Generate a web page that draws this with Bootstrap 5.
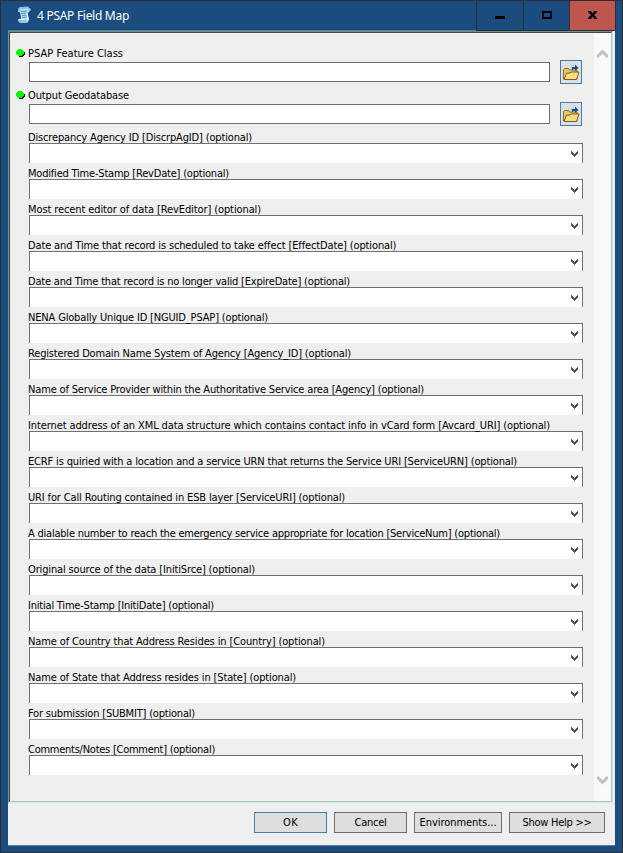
<!DOCTYPE html>
<html lang="en">
<head>
<meta charset="utf-8">
<meta name="viewport" content="width=device-width, initial-scale=1">
<title>4 PSAP Field Map</title>
<link href="https://cdn.jsdelivr.net/npm/bootstrap@5.3.0/dist/css/bootstrap.min.css" rel="stylesheet">
<style>
body{margin:0;overflow:hidden;font:11px/14px "DejaVu Sans Condensed","DejaVu Sans",sans-serif;font-stretch:condensed;color:#000}
.win{width:623px;height:853px;background:#1a4c7f;border:1px solid #302d32;padding:0 7px 6px}
.titlebar{height:29px;color:#fff;font:12px/16px "Noto Sans",sans-serif;padding-left:8px;margin-right:-1px}
.title-text{padding:7px 0 0 4px}
.caption-btn{border-left:1px solid #302d32;border-bottom:1px solid #302d32;height:30px;width:47px}
.caption-btn.narrow{width:46px}
.caption-btn.close-btn{background:#c0574f;border-right:1px solid #302d32}
.client{background:#efefef;border-top:1px solid #557d90;border-bottom:1px solid #5b82a8;height:816px}
.panel{height:772px;width:605px;border-top:1px solid #6f938f;border-left:1px solid #6f938f;border-right:1px solid #d8e9e1;border-bottom:1px solid #d8e9e1}
.panel-in{height:770px;border:1px solid #484848;border-right-color:#a5c8b9;border-bottom-color:#a5c8b9}
.fields{padding:13px 0 0 19px;width:584px}
.lab{height:14px;white-space:nowrap;margin-left:-1px}
.lab span{display:inline-block;margin-top:1px}
.req{height:42px}
.req .lab{margin-bottom:2px}
.box{width:521px;height:20px;border:1px solid #707070;background:#fff}
.dot{width:9px;height:9px;left:-12px;top:3px}
.folder{width:22px;height:24px;border:1px solid #3c80b5;background:#dfdfdf;margin:-2px 0 0 10px}
.opt{height:36px;width:554px}
.combo{height:20px;border:1px solid #707070;border-bottom:0;background:#fff;padding-right:4px;margin-top:-1px}
.combo svg{margin-top:1px}
.bar{width:17px;background:#f9f9f9;padding:16px 0 16px}
.push{height:21px;border:1px solid #707070;background:#dedede;white-space:nowrap;font-size:11px}
.push span{margin-top:1px}
.push.ok{border-color:#3c80b5}
.w-std{width:73px}
.w-env{width:88px}
.w-help{width:96px}
.actions{padding:9px 10px 0 0;gap:7px}
svg{display:block}
</style>
</head>
<body>
<div class="win">
  <header class="titlebar d-flex align-items-start position-relative z-1">
    <svg width="17" height="24" viewBox="0 0 17 24"><path d="M2.500 8L5 7h8v4l-1.500 1 1.500 7-2 2.500H5l-1-2 1-3-1-5-2-1z" fill="#bfe0f8"/><path d="M2 8l2-2 8-.5 1 1v1L5 8.500 4 11H2zM12 6.500l2 .5 1 2-2 2z" fill="#8fc2ee"/><path d="M2 18l7-.5 2 3h2l-2 1.500H4L2 20z" fill="#8fc6f1"/><path d="M5 10.500l6-.5M5 12.500l6-.5M6 14.500l5-.5M6 16.500l5-.5" stroke="#4b90cf"/><path d="M11 12l1 7" stroke="#f4fbff" stroke-width="1.500"/><path d="M3 18.500l6-.3" stroke="#eef8ff"/></svg>
    <div class="title-text flex-grow-1 text-nowrap"><span data-w="92">4 PSAP Field Map</span></div>
    <div class="caption-btn"><svg width="46" height="29"><path d="M18 15h10v3H18z"/></svg></div>
    <div class="caption-btn narrow"><svg width="45" height="29"><path d="M19 11h8v6h-8z" fill="none" stroke="#000" stroke-width="2"/></svg></div>
    <div class="caption-btn close-btn"><svg width="45" height="29"><path d="M18 10h3l1.500 2.500L24 10h3v1l-3 3 3 3v1h-3l-1.500-2.500L21 18h-3v-1l3-3-3-3z"/></svg></div>
  </header>
  <main class="client">
    <div class="panel"><div class="panel-in d-flex">
      <div class="fields" id="fields"></div>
      <div class="bar d-flex flex-column justify-content-between align-items-center">
        <svg width="11" height="11"><path d="M0 8l5.500-5.500L11 8" fill="none" stroke="#bfbfbf" stroke-width="3"/></svg>
        <svg width="11" height="11"><path d="M0 3l5.500 5.500L11 3" fill="none" stroke="#bfbfbf" stroke-width="3"/></svg>
      </div>
    </div></div>
    <div class="actions d-flex justify-content-end">
      <div class="push ok w-std d-flex align-items-center justify-content-center"><span data-w="15">OK</span></div>
      <div class="push w-std d-flex align-items-center justify-content-center"><span data-w="32">Cancel</span></div>
      <div class="push w-env d-flex align-items-center justify-content-center"><span data-w="77">Environments...</span></div>
      <div class="push w-help d-flex align-items-center justify-content-center"><span data-w="69">Show Help &gt;&gt;</span></div>
    </div>
  </main>
</div>
<script src="https://cdn.jsdelivr.net/npm/bootstrap@5.3.0/dist/js/bootstrap.bundle.min.js"></script>
<script>
const required = [["PSAP Feature Class",95],["Output Geodatabase",101]];
const optional = [
 ["Discrepancy Agency ID [DiscrpAgID] (optional)",224],
 ["Modified Time-Stamp [RevDate] (optional)",201],
 ["Most recent editor of data [RevEditor] (optional)",233],
 ["Date and Time that record is scheduled to take effect [EffectDate] (optional)",368],
 ["Date and Time that record is no longer valid [ExpireDate] (optional)",322],
 ["NENA Globally Unique ID [NGUID_PSAP] (optional)",240],
 ["Registered Domain Name System of Agency [Agency_ID] (optional)",323],
 ["Name of Service Provider within the Authoritative Service area [Agency] (optional)",396],
 ["Internet address of an XML data structure which contains contact info in vCard form [Avcard_URI] (optional)",522],
 ["ECRF is quiried with a location and a service URN that returns the Service URI [ServiceURN] (optional)",489],
 ["URI for Call Routing contained in ESB layer [ServiceURI] (optional)",317],
 ["A dialable number to reach the emergency service appropriate for location [ServiceNum] (optional)",472],
 ["Original source of the data [InitiSrce] (optional)",227],
 ["Initial Time-Stamp [InitiDate] (optional)",186],
 ["Name of Country that Address Resides in [Country] (optional)",297],
 ["Name of State that Address resides in [State] (optional)",268],
 ["For submission [SUBMIT] (optional)",167],
 ["Comments/Notes [Comment] (optional)",187]];
const dot = '<svg class="dot position-absolute" viewBox="0 0 9 9"><path d="M3 1h4v1h1v1h1v3H8v1H7v1H3V7H2z"/><path d="M2 0h4v1h1v1h1v3H7v1H6v1H2V6H1V5H0V2h1V1h1z" fill="#00fa00"/></svg>';
const folder = '<svg width="20" height="22" viewBox="0 0 20 22"><path d="M2.500 18V8.500l1-1h4l1 1.500h7.500v9z" fill="#e5c964" stroke="#8a6c22"/><path d="M3 18.500L5.500 12H9l1-1h8l-2.500 7.500z" fill="#f7dc80" stroke="#7d601d"/><path d="M11 6h3V3.500L17.500 7 14 10V8h-2v1h-1z" fill="#124f8a"/><path d="M10.500 5.500v3M12 4.500h1" stroke="#8ccde8"/></svg>';
const arrow = '<svg width="7" height="6" viewBox="0 0 7 6" shape-rendering="crispEdges"><path d="M0 0h1v1h1v1h1v1h1V2h1V1h1V0h1v3H6v1H5v1H4v1H3V5H2V4H1V3H0z" fill="#555"/></svg>';
document.getElementById("fields").innerHTML =
  required.map(([t,w]) => `<div class="req"><div class="lab position-relative">${dot}<span data-w="${w}">${t}</span></div><div class="d-flex"><div class="box"></div><div class="folder">${folder}</div></div></div>`).join("") +
  optional.map(([t,w]) => `<div class="opt"><div class="lab"><span data-w="${w}">${t}</span></div><div class="combo d-flex align-items-center justify-content-end">${arrow}</div></div>`).join("");
// Fit each caption to its nominal width
document.querySelectorAll("[data-w]").forEach(s => {
  s.style.display = "inline-block";
  const n = s.textContent.length;
  s.style.letterSpacing = ((+s.dataset.w - s.getBoundingClientRect().width) / n) + "px";
});
</script>
</body>
</html>
